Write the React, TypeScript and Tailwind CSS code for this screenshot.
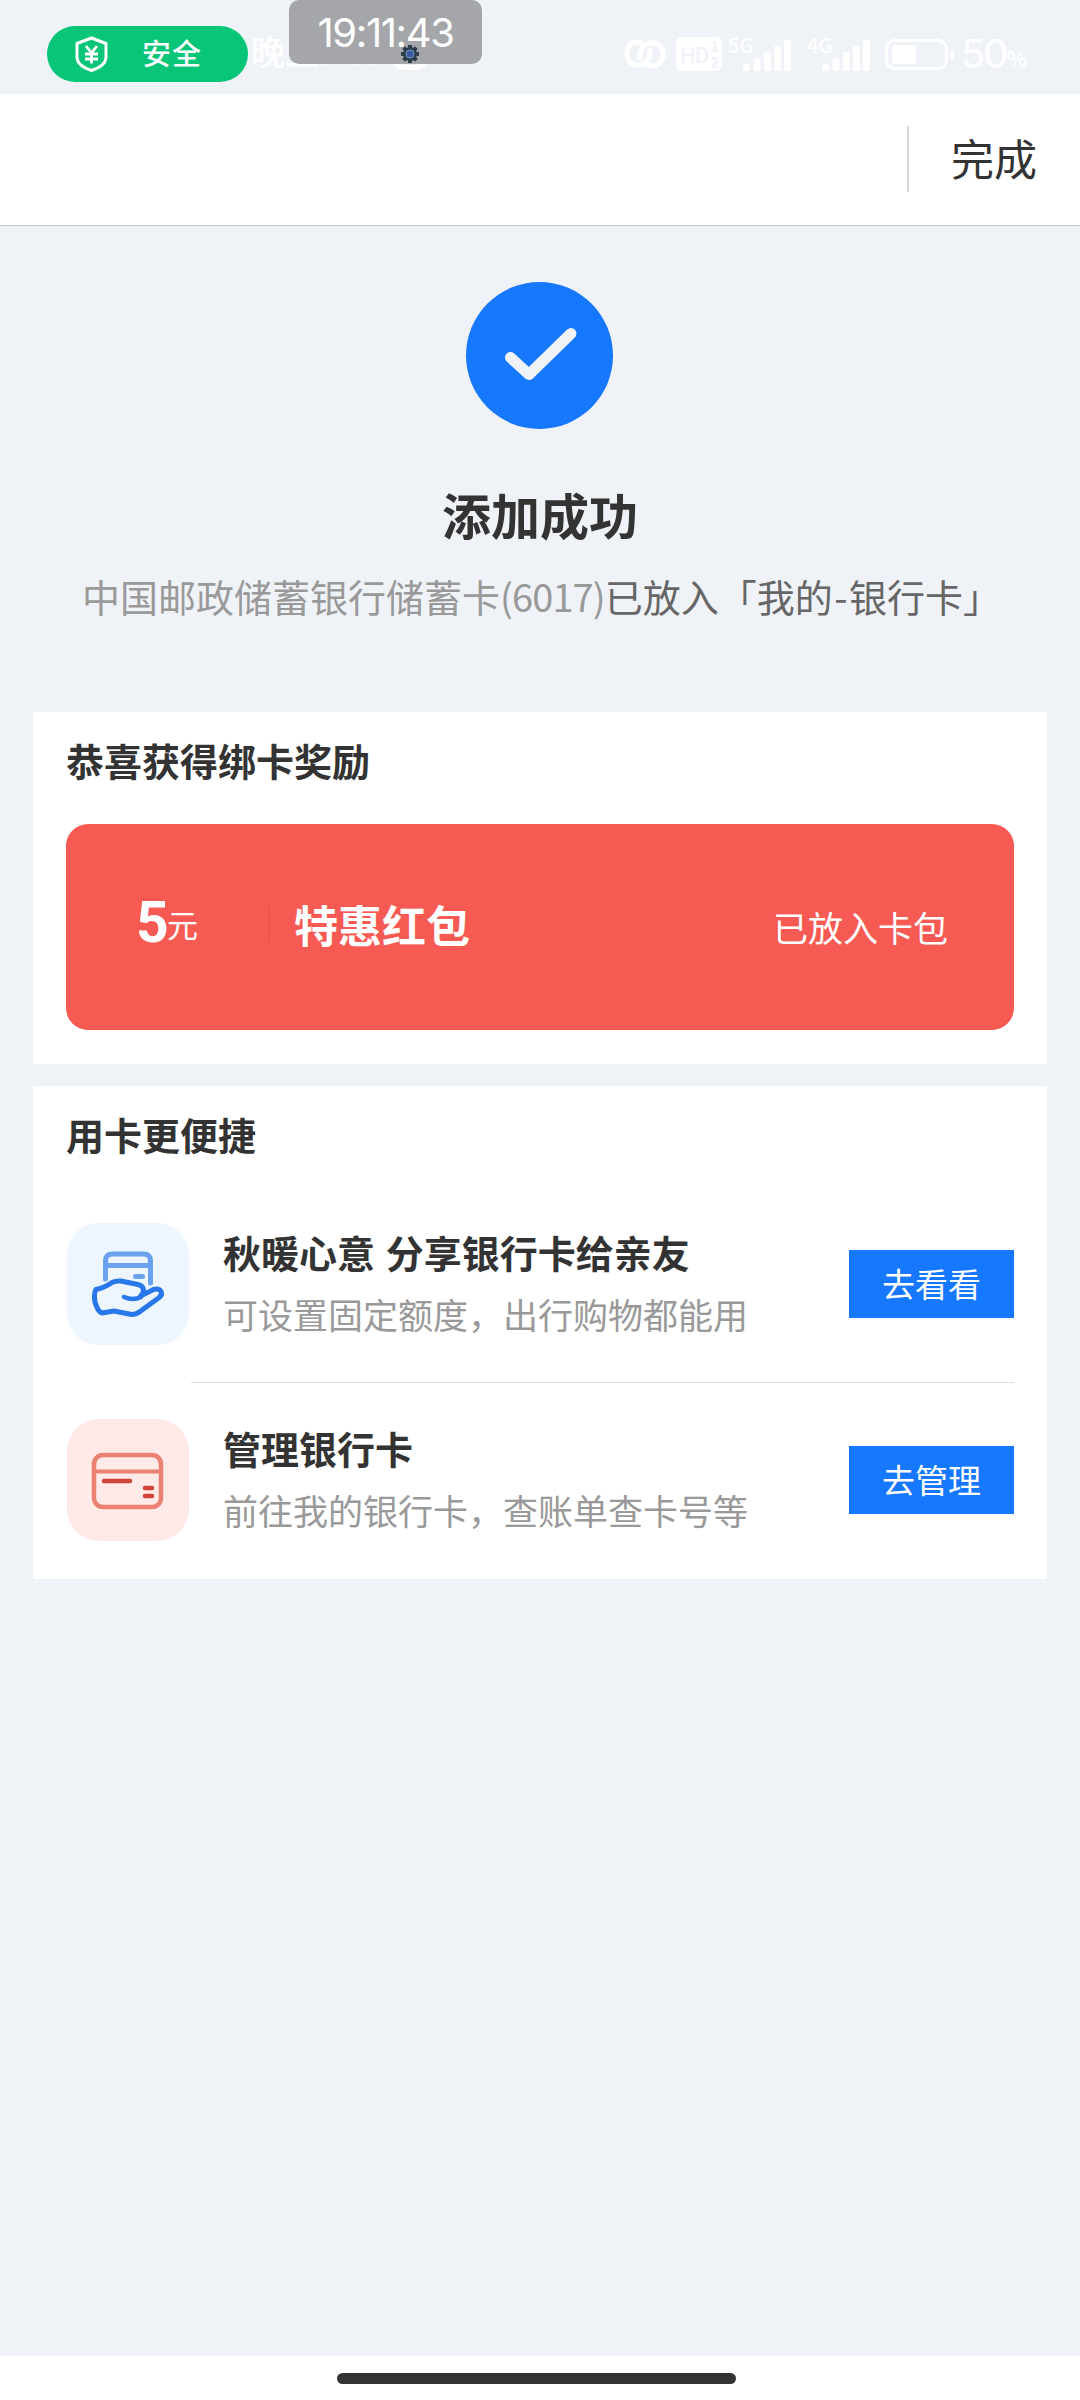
import type { ReactNode } from 'react';

function SignalBars({ label }: { label: string }) {
  return (
    <div className="relative h-[34px] w-[64px] shrink-0">
      <span className="absolute left-0 top-[-1px] text-[20px] font-medium leading-[18px]">{label}</span>
      <svg className="absolute bottom-0 left-[15px]" width="49" height="31" viewBox="0 0 49 31" fill="currentColor">
        <rect x="0" y="24" width="7" height="7" rx="2" />
        <rect x="10.5" y="18" width="7" height="13" rx="2" />
        <rect x="21" y="12" width="7" height="19" rx="2" />
        <rect x="31" y="6" width="7" height="25" rx="2" />
        <rect x="41" y="0" width="7" height="31" rx="2" />
      </svg>
    </div>
  );
}

function StatusBar() {
  return (
    <header className="relative flex h-[94px] items-start text-white">
      {/* Safety pill */}
      <div className="ml-[47px] mt-[26px] flex h-[56px] w-[201px] items-center rounded-full bg-[#08c577] pl-[28px]">
        <svg width="33" height="36" viewBox="0 0 33 36" fill="none" stroke="currentColor" strokeWidth="3" strokeLinejoin="round">
          <path d="M16.5 2 31 7.5V21c0 6.500-7 11-14.500 13.500C9 32 2 27.500 2 21V7.500Z" />
          <path d="m11 10 5.500 7 5.500-7M16.500 17v10.500M10 18h13M10 23h13" strokeWidth="2.800" />
        </svg>
        <span className="-mt-[4px] ml-[34px] text-[29px] font-medium leading-[40px] tracking-[1px]">安全</span>
      </div>

      <div className="ml-[3px] mt-[33px] flex items-center">
        <span className="w-[142px] whitespace-nowrap font-['Inter','Noto_Sans_CJK_SC',sans-serif] text-[34px] font-medium leading-[40px]">晚上7:11</span>
        <span className="h-[34px] w-[34px] rounded-[10px] border-[5px] border-white" />
      </div>

      {/* Floating clock */}
      <div className="absolute left-[289px] top-0 flex h-[64px] w-[193px] justify-center rounded-[10px] bg-[#9fa1a5]/95">
        <span className="mt-[8px] font-['Inter','Noto_Sans_CJK_SC',sans-serif] text-[40px] leading-[50px] tracking-[-1.4px]">19:11:43</span>
        <svg className="absolute left-[111px] top-[44px]" width="20" height="20" viewBox="0 0 20 20">
          <path d="M10 1v18M1 10h18M3.600 3.600l12.800 12.800M16.400 3.600 3.600 16.400" stroke="#2c3d4b" strokeWidth="4" />
          <circle cx="10" cy="10" r="7" fill="#2c3d4b" />
          <circle cx="10" cy="10" r="4" fill="#3858a0" stroke="#6f9cc4" strokeWidth="1" />
        </svg>
      </div>

      <div className="ml-auto mr-[53px] mt-[37px] flex h-[34px] w-[403px] items-center">
        <svg className="shrink-0" width="42" height="30" viewBox="0 0 42 30" fill="none" stroke="currentColor" strokeWidth="5" strokeLinecap="round">
          <path d="M17 3.500C8 1 3 7.500 3 14.500c0 8 7 13 13.500 11.500C23 24.500 27 18 26 11" />
          <path d="M25 26.500c9 2.500 14-4 14-11 0-8-7-13-13.500-11.500C19 5.500 15 12 16 19" />
        </svg>
        <span className="ml-[10px] flex h-[34px] w-[46px] shrink-0 items-center rounded-[6px] bg-white pl-[4px] text-[#eff2f8]">
          <span className="text-[21px] font-medium leading-none tracking-[-1px]">HD</span>
          <span className="ml-[2px] flex flex-col text-[15px] font-bold leading-[16px]">
            <span>1</span>
            <span>2</span>
          </span>
        </span>
        <span className="ml-[6px]"><SignalBars label="5G" /></span>
        <span className="ml-[15px]"><SignalBars label="4G" /></span>
        <svg className="ml-[14px] shrink-0" width="70" height="31" viewBox="0 0 70 31" fill="currentColor">
          <rect x="1.500" y="1.500" width="60" height="28" rx="8" fill="none" stroke="currentColor" strokeWidth="3" />
          <rect x="7" y="6" width="24" height="19" rx="3" />
          <rect x="65" y="11" width="4" height="9" rx="2" />
        </svg>
        <span className="ml-[6px] w-[46px] font-['Inter','Noto_Sans_CJK_SC',sans-serif] text-[40px] leading-none tracking-[-2px]">50</span>
        <span className="mt-[9px] text-[21px] font-bold leading-none">%</span>
      </div>
    </header>
  );
}

function ShareCardIcon() {
  return (
    <svg width="122" height="122" viewBox="0 0 122 122" fill="none" strokeLinecap="round" strokeLinejoin="round">
      <g stroke="#6ba2ef" strokeWidth="5">
        <path d="M38.500 56V38q0-7 7-7h31q7 0 7 7v22" />
        <path d="M39 42.500h44" strokeLinecap="butt" />
        <path d="M68.500 53.500h7" />
      </g>
      <path
        d="M29 66.500Q38 64.500 45 59.500q4-2 9-1.500l17 3.500c6 1.500 7.500 7 2.500 11.500l13-6.500c8-2 10.500 4.500 5 8.500L73 88.500q-5 4-11 2.500l-15-3-12 2q-3-1-5-5.500-3-6-2.500-12 0-4 1.500-6Z"
        stroke="#2878ec"
        strokeWidth="5"
      />
      <path d="M57 74q9 4 17 0" stroke="#2878ec" strokeWidth="4.500" />
    </svg>
  );
}

function ManageCardIcon() {
  return (
    <svg width="122" height="122" viewBox="0 0 122 122" fill="none" strokeLinecap="round">
      <rect x="27" y="36" width="67" height="52" rx="9" stroke="#ea8172" strokeWidth="4.500" />
      <path d="M28 52.500h66" stroke="#ea8172" strokeWidth="4" />
      <path d="M37 62h26M78 69h7M78 77h7" stroke="#cf4639" strokeWidth="4.500" />
    </svg>
  );
}

type ServiceRowProps = {
  icon: ReactNode;
  iconBg: string;
  title: string;
  desc: string;
  action: string;
};

function ServiceRow({ icon, iconBg, title, desc, action }: ServiceRowProps) {
  return (
    <div className="flex h-[122px] items-center pl-px">
      <div className={`h-[122px] w-[122px] shrink-0 rounded-[32px] ${iconBg}`}>{icon}</div>
      <div className="-mt-[3px] ml-[34px] flex-1 whitespace-nowrap">
        <h3 className="text-[38px] font-bold leading-[56px] text-[#333] [word-spacing:2px]">{title}</h3>
        <p className="mt-[6px] text-[35px] leading-[56px] text-[#999]">{desc}</p>
      </div>
      <button className="h-[68px] w-[165px] bg-[#1677ff] pb-[3px] text-[33px] leading-[60px] text-white">{action}</button>
    </div>
  );
}

export default function App() {
  return (
    <div className="flex h-[2400px] w-[1080px] flex-col overflow-hidden bg-[#eff3f8] font-['Noto_Sans_CJK_SC',sans-serif]">
      <StatusBar />

      {/* Title bar */}
      <nav className="flex h-[132px] items-center justify-end border-b border-[#c6c9cc] bg-white pr-[43px]">
        <span className="-mt-[2px] h-[66px] w-[2px] bg-[#d8d8d8]" />
        <button className="-mt-[6px] ml-[42px] text-[43px] leading-[60px] text-[#333]">完成</button>
      </nav>

      <main className="flex-1 px-[33px]">
        {/* Result */}
        <section className="flex h-[486px] flex-col items-center pt-[56px]">
          <div className="mr-[2px] h-[147px] w-[147px] rounded-full bg-[#1677ff]">
            <svg width="147" height="147" viewBox="0 0 147 147" fill="none">
              <path d="M44.500 75.500 63 92.500 105 51.500" stroke="#eff3f8" strokeWidth="11" strokeLinecap="round" strokeLinejoin="round" />
            </svg>
          </div>
          <h1 className="mt-[50px] text-[49px] font-bold leading-[70px] text-[#333]">添加成功</h1>
          <p className="ml-[3px] mt-[19px] whitespace-nowrap text-[38px] leading-[56px] text-[#999]">
            中国邮政储蓄银行储蓄卡<span className="tracking-[-0.900px]">(6017)</span>
            <span className="text-[#666]">已放入「我的<span className="mx-[1.500px]">-</span>银行卡」</span>
          </p>
        </section>

        {/* Reward */}
        <section className="h-[352px] bg-white px-[33px] pt-[20px]">
          <h2 className="text-[38px] font-bold leading-[56px] text-[#333]">恭喜获得绑卡奖励</h2>
          <div className="mt-[36px] flex h-[206px] items-center rounded-[22px] bg-[#f75a53] pb-[6px] text-white">
            <div className="flex w-[202px] items-center pl-[70px]">
              <span className="-mt-[2px] w-[31px] font-['Roboto',sans-serif] text-[57px] font-bold leading-[60px]">5</span>
              <span className="text-[31px] leading-[56px]">元</span>
            </div>
            <span className="h-[36px] w-[2px] bg-[#f0534c]" />
            <span className="ml-[24px] text-[44px] font-bold leading-[60px]">特惠红包</span>
            <span className="ml-auto mr-[66px] mt-[5px] text-[35px] leading-[56px]">已放入卡包</span>
          </div>
        </section>

        {/* Services */}
        <section className="mt-[22px] h-[493px] bg-white px-[33px] pt-[20px]">
          <h2 className="text-[38px] font-bold leading-[56px] text-[#333]">用卡更便捷</h2>
          <div className="mt-[61px]">
            <ServiceRow
              icon={<ShareCardIcon />}
              iconBg="bg-[#edf5ff]"
              title="秋暖心意 分享银行卡给亲友"
              desc="可设置固定额度，出行购物都能用"
              action="去看看"
            />
            <div className="mb-[36px] ml-[125px] mt-[37px] h-px bg-[#dedfe2]" />
            <ServiceRow
              icon={<ManageCardIcon />}
              iconBg="bg-[#ffeae7]"
              title="管理银行卡"
              desc="前往我的银行卡，查账单查卡号等"
              action="去管理"
            />
          </div>
        </section>
      </main>

      {/* Gesture bar */}
      <footer className="flex h-[44px] justify-center bg-white pr-[7px] pt-[17px]">
        <span className="h-[11px] w-[399px] rounded-full bg-[#333]" />
      </footer>
    </div>
  );
}
